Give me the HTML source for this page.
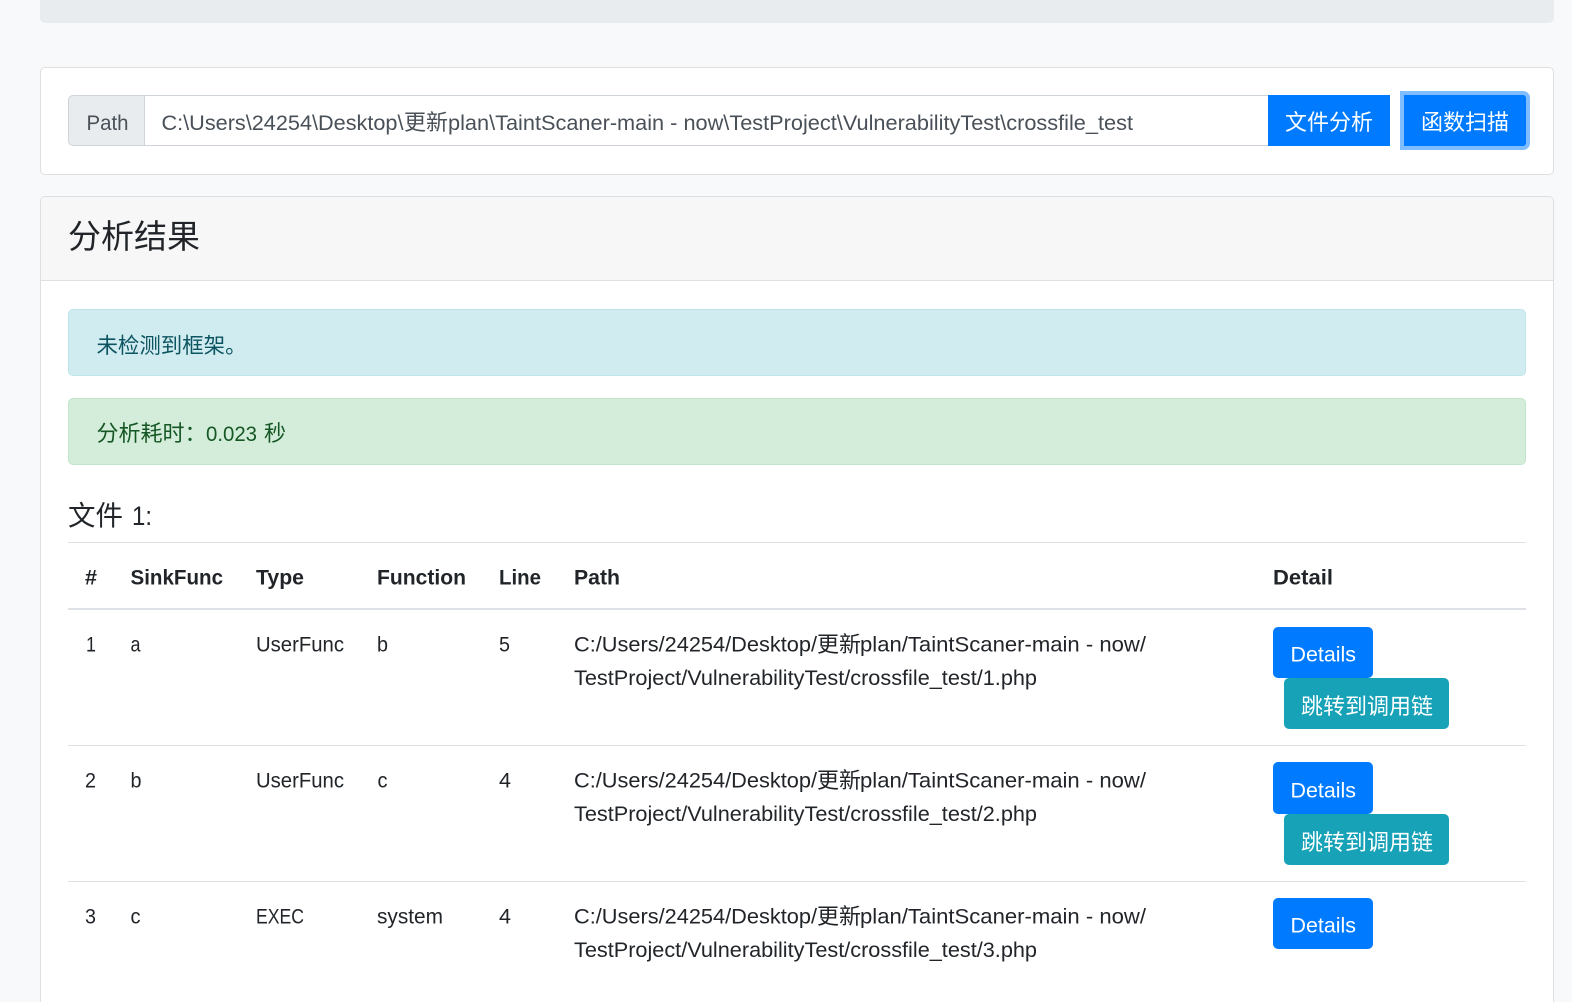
<!DOCTYPE html>
<html lang="zh-CN">
<head>
<meta charset="utf-8">
<title>分析结果</title>
<style>
html,body{margin:0;padding:0;width:1572px;height:1002px;overflow:hidden;background:#f8f9fa}
#p{position:relative;width:1572px;height:1002px;overflow:hidden;background:#f8f9fa}
.b{position:absolute;box-sizing:border-box}
svg{position:absolute;left:0;top:0}
text{font-family:"Liberation Sans","Noto Sans CJK SC",sans-serif;font-size:21.44px;fill:#212529;white-space:pre}
.c{font-family:"Noto Sans CJK SC","Liberation Sans",sans-serif;font-size:22px}
.h{font-weight:700}
.i{fill:#495057}
.w{fill:#fff}
</style>
</head>
<body>
<div id="p">
<div class="b" style="left:40px;top:-6px;width:1514px;height:29px;background:#e9ecef;border-radius:5px"></div>
<div class="b" style="left:40px;top:67px;width:1514px;height:108px;background:#fff;border:1px solid #dfdfdf;border-radius:5px"></div>
<div class="b" style="left:68px;top:95px;width:77px;height:51px;background:#e9ecef;border:1px solid #ced4da;border-radius:5px 0 0 5px"></div>
<div class="b" style="left:144px;top:95px;width:1125px;height:51px;background:#fff;border:1px solid #ced4da"></div>
<div class="b" style="left:1268px;top:95px;width:122px;height:51px;background:#007bff"></div>
<div class="b" style="left:1400px;top:91px;width:130px;height:59px;background:#007bff;border:4px solid #80bdff;border-radius:0 7px 7px 0"></div>

<div class="b" style="left:40px;top:196px;width:1514px;height:806px;background:#fff;border:1px solid #dfdfdf;border-bottom:none;border-radius:5px 5px 0 0"></div>
<div class="b" style="left:41px;top:197px;width:1512px;height:84px;background:#f7f7f7;border-bottom:1px solid #dfdfdf;border-radius:4px 4px 0 0"></div>

<div class="b" style="left:68px;top:309px;width:1458px;height:67px;background:#d1ecf1;border:1px solid #bee5eb;border-radius:5px"></div>
<div class="b" style="left:68px;top:398px;width:1458px;height:67px;background:#d4edda;border:1px solid #c3e6cb;border-radius:5px"></div>

<div class="b" style="left:68px;top:542px;width:1458px;height:1px;background:#dee2e6"></div>
<div class="b" style="left:68px;top:608px;width:1458px;height:2px;background:#dee2e6"></div>
<div class="b" style="left:68px;top:745px;width:1458px;height:1px;background:#dee2e6"></div>
<div class="b" style="left:68px;top:881px;width:1458px;height:1px;background:#dee2e6"></div>

<div class="b" style="left:1273px;top:627px;width:100px;height:51px;background:#007bff;border-radius:5px"></div>
<div class="b" style="left:1284px;top:678px;width:165px;height:51px;background:#17a2b8;border-radius:5px"></div>
<div class="b" style="left:1273px;top:762px;width:100px;height:52px;background:#007bff;border-radius:5px"></div>
<div class="b" style="left:1284px;top:814px;width:165px;height:51px;background:#17a2b8;border-radius:5px"></div>
<div class="b" style="left:1273px;top:898px;width:100px;height:51px;background:#007bff;border-radius:5px"></div>

<svg width="1572" height="1002" xmlns="http://www.w3.org/2000/svg">
<text class="i" x="86.5" y="130" textLength="42" lengthAdjust="spacingAndGlyphs">Path</text>
<text class="i" x="161.5" y="130" textLength="242" lengthAdjust="spacingAndGlyphs">C:\Users\24254\Desktop\</text>
<text class="i c" x="404" y="130">更新</text>
<text class="i" x="448" y="130" textLength="685" lengthAdjust="spacingAndGlyphs">plan\TaintScaner-main - now\TestProject\VulnerabilityTest\crossfile_test</text>
<text class="w c" x="1285" y="130">文件分析</text>
<text class="w c" x="1421" y="130">函数扫描</text>

<text class="c" x="68" y="248" style="font-size:33px">分析结果</text>
<text class="c" x="96.5" y="353" style="fill:#0c5460;font-size:21.44px">未检测到框架。</text>
<text class="c" x="96.5" y="441" style="fill:#155724">分析耗时：</text>
<text x="206" y="441" style="fill:#155724" textLength="51" lengthAdjust="spacingAndGlyphs">0.023</text>
<text class="c" x="264" y="441" style="fill:#155724">秒</text>
<text class="c" x="68" y="525" style="font-size:27.5px">文件</text>
<text x="132" y="525" style="font-size:26.8px" textLength="20" lengthAdjust="spacingAndGlyphs">1:</text>

<text class="h" x="85" y="584.5" textLength="12" lengthAdjust="spacingAndGlyphs">#</text>
<text class="h" x="130.5" y="584.5" textLength="92.5" lengthAdjust="spacingAndGlyphs">SinkFunc</text>
<text class="h" x="256" y="584.5" textLength="48" lengthAdjust="spacingAndGlyphs">Type</text>
<text class="h" x="377" y="584.5" textLength="89" lengthAdjust="spacingAndGlyphs">Function</text>
<text class="h" x="499" y="584.5" textLength="42" lengthAdjust="spacingAndGlyphs">Line</text>
<text class="h" x="574" y="584.5" textLength="46" lengthAdjust="spacingAndGlyphs">Path</text>
<text class="h" x="1273" y="584.5" textLength="60" lengthAdjust="spacingAndGlyphs">Detail</text>

<text x="86" y="651.5" textLength="10" lengthAdjust="spacingAndGlyphs">1</text>
<text x="130.5" y="651.5" textLength="10" lengthAdjust="spacingAndGlyphs">a</text>
<text x="256" y="651.5" textLength="88" lengthAdjust="spacingAndGlyphs">UserFunc</text>
<text x="377" y="651.5" textLength="11" lengthAdjust="spacingAndGlyphs">b</text>
<text x="499" y="651.5" textLength="11" lengthAdjust="spacingAndGlyphs">5</text>
<text x="574" y="651.5" textLength="243" lengthAdjust="spacingAndGlyphs">C:/Users/24254/Desktop/</text>
<text class="c" x="817" y="652">更新</text>
<text x="860" y="651.5" textLength="286" lengthAdjust="spacingAndGlyphs">plan/TaintScaner-main - now/</text>
<text x="574" y="685" textLength="463" lengthAdjust="spacingAndGlyphs">TestProject/VulnerabilityTest/crossfile_test/1.php</text>
<text class="w" x="1290.5" y="661.5" textLength="65.5" lengthAdjust="spacingAndGlyphs">Details</text>
<text class="w c" x="1301" y="714">跳转到调用链</text>

<text x="85" y="787.5" textLength="11" lengthAdjust="spacingAndGlyphs">2</text>
<text x="130.5" y="787.5" textLength="11" lengthAdjust="spacingAndGlyphs">b</text>
<text x="256" y="787.5" textLength="88" lengthAdjust="spacingAndGlyphs">UserFunc</text>
<text x="377.5" y="787.5" textLength="10" lengthAdjust="spacingAndGlyphs">c</text>
<text x="499" y="787.5" textLength="12" lengthAdjust="spacingAndGlyphs">4</text>
<text x="574" y="787.5" textLength="243" lengthAdjust="spacingAndGlyphs">C:/Users/24254/Desktop/</text>
<text class="c" x="817" y="788">更新</text>
<text x="860" y="787.5" textLength="286" lengthAdjust="spacingAndGlyphs">plan/TaintScaner-main - now/</text>
<text x="574" y="821" textLength="463" lengthAdjust="spacingAndGlyphs">TestProject/VulnerabilityTest/crossfile_test/2.php</text>
<text class="w" x="1290.5" y="797.5" textLength="65.5" lengthAdjust="spacingAndGlyphs">Details</text>
<text class="w c" x="1301" y="850">跳转到调用链</text>

<text x="85" y="923.5" textLength="11" lengthAdjust="spacingAndGlyphs">3</text>
<text x="130.5" y="923.5" textLength="10" lengthAdjust="spacingAndGlyphs">c</text>
<text x="256" y="923.5" textLength="48" lengthAdjust="spacingAndGlyphs">EXEC</text>
<text x="377" y="923.5" textLength="66" lengthAdjust="spacingAndGlyphs">system</text>
<text x="499" y="923.5" textLength="12" lengthAdjust="spacingAndGlyphs">4</text>
<text x="574" y="923.5" textLength="243" lengthAdjust="spacingAndGlyphs">C:/Users/24254/Desktop/</text>
<text class="c" x="817" y="924">更新</text>
<text x="860" y="923.5" textLength="286" lengthAdjust="spacingAndGlyphs">plan/TaintScaner-main - now/</text>
<text x="574" y="957" textLength="463" lengthAdjust="spacingAndGlyphs">TestProject/VulnerabilityTest/crossfile_test/3.php</text>
<text class="w" x="1290.5" y="932.5" textLength="65.5" lengthAdjust="spacingAndGlyphs">Details</text>
</svg>
</div>
</body>
</html>
